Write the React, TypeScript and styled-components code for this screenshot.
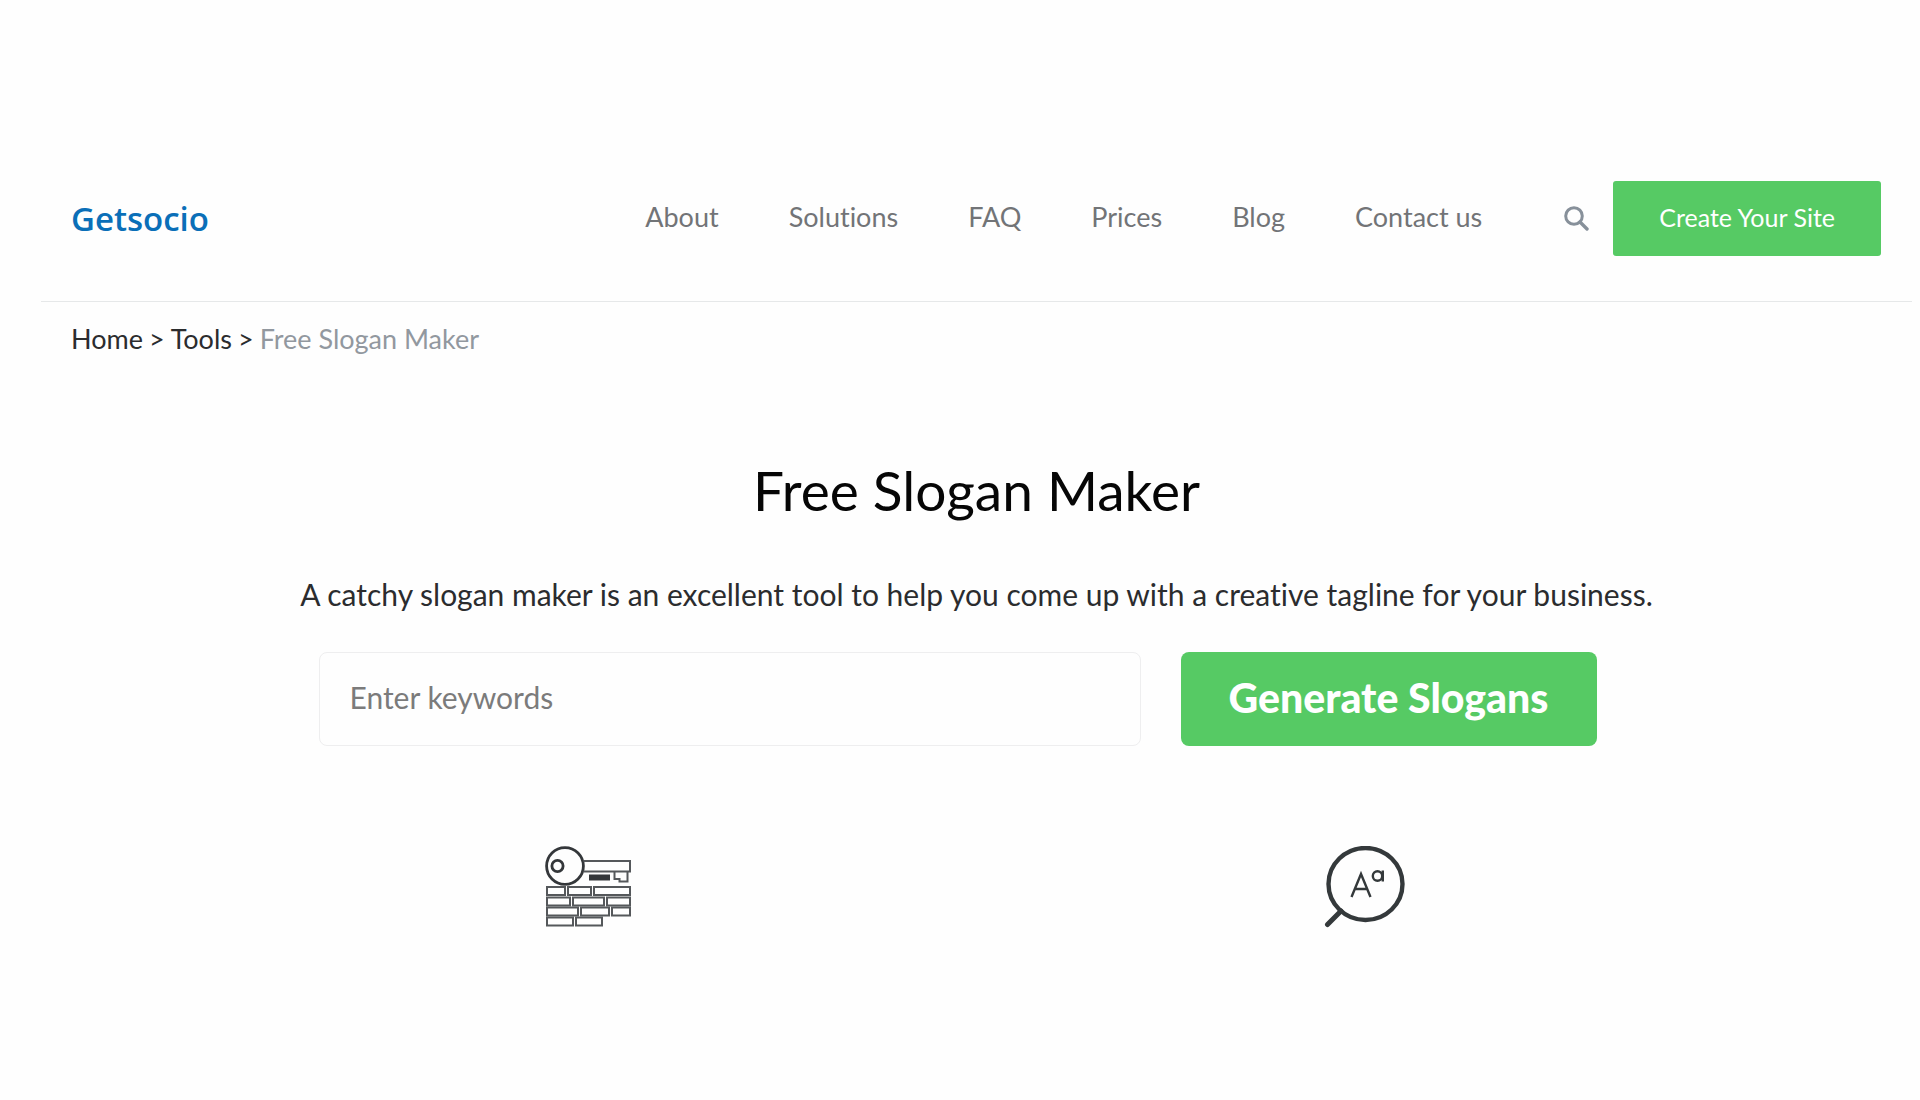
import React from "react";
import styled, { createGlobalStyle } from "styled-components";

const GlobalStyle = createGlobalStyle`
  *, *::before, *::after { box-sizing: border-box; }
  body {
    margin: 0;
    background: #fefefe;
    color: #2b2c2e;
    font-family: Lato, "Open Sans", sans-serif;
    font-variant-ligatures: none;
  }
`;

const Page = styled.div`
  padding: 145px 8px 80px 41px;
`;

const Header = styled.header`
  display: flex;
  align-items: center;
  padding: 36px 31px 45px 30px;
  border-bottom: 1px solid #e6e8e9;
`;

const Logo = styled.a`
  margin-right: auto;
  color: #0a6fb8;
  font-family: "Open Sans", "Noto Sans", sans-serif;
  font-size: 33px;
  font-weight: 600;
  line-height: 48px;
  text-decoration: none;
`;

const Nav = styled.nav`
  display: flex;
  gap: 70px;
  margin-right: 82px;
  padding-bottom: 4px;
`;

const NavLink = styled.a`
  color: #727477;
  font-size: 27px;
  line-height: 36px;
  text-decoration: none;
`;

const IconButton = styled.button`
  display: flex;
  margin-right: 24px;
  padding: 0;
  border: 0;
  background: none;
  color: #87909a;
`;

const CreateButton = styled.button`
  height: 75px;
  padding: 0 46px 4px;
  border: 0;
  border-radius: 3px;
  background: #56ca64;
  color: #fff;
  font-family: inherit;
  font-size: 25px;
  line-height: 36px;
`;

const Breadcrumb = styled.nav`
  display: flex;
  gap: 6px;
  padding: 19px 30px 17px;
  font-size: 27px;
  line-height: 36px;
`;

const Crumb = styled.a`
  color: inherit;
  text-decoration: none;
`;

const CurrentCrumb = styled.span`
  color: #92989f;
`;

const Main = styled.main`
  max-width: 1552px;
  margin: 0 auto;
  padding-top: 80px;
`;

const Title = styled.h1`
  margin: 0;
  color: #060606;
  font-size: 55px;
  font-weight: 400;
  line-height: 72px;
  text-align: center;
`;

const Lead = styled.p`
  margin: 44px 0 0;
  font-size: 30px;
  line-height: 48px;
  text-align: center;
`;

const Form = styled.form`
  display: flex;
  gap: 40px;
  padding: 34px 156px 0 118px;
`;

const Keywords = styled.input`
  flex: 1;
  min-width: 0;
  height: 94px;
  padding: 0 30px 4px;
  border: 1px solid #eeeeef;
  border-radius: 8px;
  background: #fefefe;
  color: #2b2c2e;
  font-family: inherit;
  font-size: 30px;
  &::placeholder { color: #7b7b7b; opacity: 1; }
`;

const GenerateButton = styled.button`
  height: 94px;
  padding: 0 48px 4px;
  border: 0;
  border-radius: 8px;
  background: #56ca64;
  color: #fff;
  font-family: inherit;
  font-size: 41px;
  font-weight: 900;
`;

const Features = styled.section`
  display: grid;
  grid-template-columns: 1fr 1fr;
  justify-items: center;
  padding-top: 100px;
`;

const links = ["About", "Solutions", "FAQ", "Prices", "Blog", "Contact us"];

const SearchIcon = () => (
  <svg width="25" height="25" viewBox="0 0 25 25" fill="none" stroke="currentColor" strokeWidth="3" aria-hidden="true">
    <circle cx="10" cy="10" r="8.3" />
    <path d="M16 16l7 7" strokeWidth="3.4" strokeLinecap="round" />
  </svg>
);

const KeyWallIcon = () => (
  <svg width="88" height="82" viewBox="0 0 88 82" fill="none" stroke="#55585b" strokeWidth="2" aria-hidden="true">
    <circle cx="20" cy="20" r="18.4" stroke="#34373a" strokeWidth="2.8" />
    <circle cx="12.5" cy="20" r="5.6" stroke="#34373a" strokeWidth="2.8" />
    <path d="M38.5 15H85V25.5H38.5M69.5 25.5V33H74.5V35.5H82.5V25.5" />
    <path d="M44 28.5H65V34.5H44Z" fill="#34373a" stroke="none" />
    <path d="M2 41H20V49H2ZM23 41H46V49H23ZM49 41H85V49H49Z" />
    <path d="M2 51.5H25V59.5H2ZM28 51.5H59V59.5H28ZM62 51.5H85V59.5H62Z" />
    <path d="M2 61.5H33V69.5H2ZM36 61.5H64V69.5H36ZM67 61.5H85V69.5H67Z" />
    <path d="M2 71.5H28V79.5H2ZM31 71.5H57V79.5H31Z" />
  </svg>
);

const LetterSearchIcon = () => (
  <svg width="82" height="82" viewBox="0 0 82 82" fill="none" stroke="#34393b" aria-hidden="true">
    <ellipse cx="41.5" cy="38" rx="37" ry="36" strokeWidth="4.4" />
    <path d="M17 65L3.5 78.5" strokeWidth="5" strokeLinecap="round" />
    <path d="M27.5 51L37 28L46.5 51M31 43H43" strokeWidth="2.4" />
    <circle cx="53.5" cy="30" r="4.7" strokeWidth="2.4" />
    <path d="M58.8 24.5V35.5" strokeWidth="2.4" />
  </svg>
);

export default function App() {
  return (
    <>
      <GlobalStyle />
      <Page>
        <Header>
          <Logo href="#">Getsocio</Logo>
          <Nav aria-label="Main">
            {links.map((label) => (
              <NavLink key={label} href="#">{label}</NavLink>
            ))}
          </Nav>
          <IconButton type="button" aria-label="Search"><SearchIcon /></IconButton>
          <CreateButton type="button">Create Your Site</CreateButton>
        </Header>
        <Breadcrumb aria-label="Breadcrumb">
          <Crumb href="#">Home</Crumb>
          <span>&gt;</span>
          <Crumb href="#">Tools</Crumb>
          <span>&gt;</span>
          <CurrentCrumb aria-current="page">Free Slogan Maker</CurrentCrumb>
        </Breadcrumb>
        <Main>
          <Title>Free Slogan Maker</Title>
          <Lead>A catchy slogan maker is an excellent tool to help you come up with a creative tagline for your business.</Lead>
          <Form onSubmit={(event) => event.preventDefault()}>
            <Keywords type="text" placeholder="Enter keywords" aria-label="Enter keywords" />
            <GenerateButton type="submit">Generate Slogans</GenerateButton>
          </Form>
          <Features>
            <KeyWallIcon />
            <LetterSearchIcon />
          </Features>
        </Main>
      </Page>
    </>
  );
}
